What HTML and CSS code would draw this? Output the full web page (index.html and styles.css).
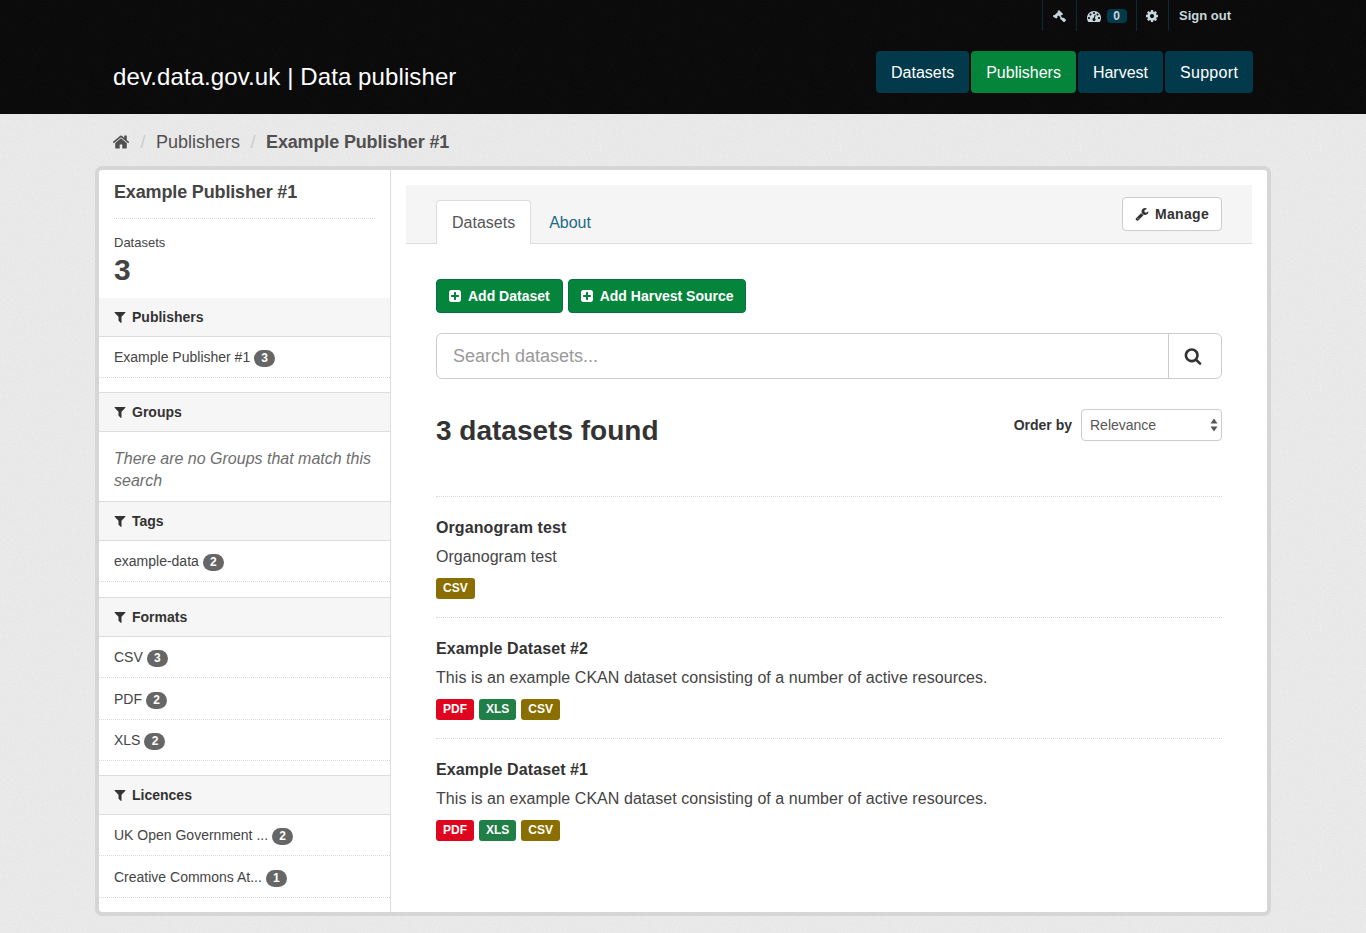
FILE: index.html
```html
<!DOCTYPE html>
<html lang="en">
<head>
    <meta charset="utf-8">
    <title>Example Publisher #1 - Publishers - dev.data.gov.uk | Data publisher</title>
    <link rel="stylesheet" href="styles.css">
</head>
<body>
<svg class="icon-defs" width="0" height="0" aria-hidden="true">
    <defs>
        <symbol id="i-home" viewBox="0 0 1792 1792"><path d="M1472 992v480q0 26-19 45t-45 19h-384v-384H768v384H384q-26 0-45-19t-19-45V992q0-1 .5-3t.5-3l575-474 575 474q1 2 1 6zm223-69l-62 74q-8 9-21 11h-3q-13 0-21-7L896 424l-692 577q-12 8-24 7-13-2-21-11l-62-74q-8-10-7-23.5t11-21.5l719-599q32-26 76-26t76 26l244 204V288q0-14 9-23t23-9h192q14 0 23 9t9 23v408l219 182q10 8 11 21.5t-7 23.5z"/></symbol>
        <symbol id="i-filter" viewBox="0 0 1792 1792"><path d="M1595 295q17 41-14 70l-493 493v742q0 42-39 59-13 5-25 5-27 0-45-19l-256-256q-19-19-19-45V858L211 365q-31-29-14-70 17-39 59-39h1280q42 0 59 39z"/></symbol>
        <symbol id="i-search" viewBox="0 0 1792 1792"><path d="M1216 832q0-185-131.5-316.5T768 384 451.5 515.5 320 832t131.5 316.5T768 1280t316.5-131.5T1216 832zm512 832q0 52-38 90t-90 38q-54 0-90-38l-343-342q-179 124-399 124-143 0-273.5-55.5t-225-150-150-225T64 832t55.5-273.5 150-225 225-150T768 128t273.5 55.5 225 150 150 225T1472 832q0 220-124 399l343 343q37 37 37 90z"/></symbol>
        <symbol id="i-plus" viewBox="0 0 1792 1792"><path d="M1408 960V832q0-26-19-45t-45-19h-320V448q0-26-19-45t-45-19H832q-26 0-45 19t-19 45v320H448q-26 0-45 19t-19 45v128q0 26 19 45t45 19h320v320q0 26 19 45t45 19h128q26 0 45-19t19-45v-320h320q26 0 45-19t19-45zm256-544v960q0 119-84.5 203.5T1376 1664H416q-119 0-203.5-84.5T128 1376V416q0-119 84.5-203.5T416 128h960q119 0 203.5 84.5T1664 416z"/></symbol>
        <symbol id="i-wrench" viewBox="0 0 1792 1792"><path d="M448 1472q0-26-19-45t-45-19-45 19-19 45 19 45 45 19 45-19 19-45zm644-420l-682 682q-37 37-90 37-52 0-91-37l-106-108q-38-36-38-90 0-53 38-91l681-681q39 98 114.5 173.5T1092 1052zm634-435q0 39-23 106-47 134-164.5 217.5T1280 1024q-185 0-316.5-131.5T832 576t131.5-316.5T1280 128q58 0 121.5 16.5T1509 191q16 11 16 28t-16 28l-293 169v224l193 107q5-3 79-48.5t135.5-81 70.5-35.5q15 0 23.5 10t8.5 25z"/></symbol>
        <symbol id="i-cog" viewBox="0 0 1792 1792"><path d="M1152 896q0-106-75-181t-181-75-181 75-75 181 75 181 181 75 181-75 75-181zm512-109v222q0 12-8 23t-20 13l-185 28q-19 54-39 91 35 50 107 138 10 12 10 25t-9 23q-27 37-99 108t-94 71q-12 0-26-9l-138-108q-44 23-91 38-16 136-29 186-7 28-36 28H785q-14 0-24.5-8.5T749 1634l-28-184q-49-16-90-37l-141 107q-10 9-25 9-14 0-25-11-126-114-165-168-7-10-7-23 0-12 8-23 15-21 51-66.5t54-70.5q-27-50-41-99l-183-27q-13-2-21-12.5t-8-23.5V783q0-12 8-23t19-13l186-28q14-46 39-92-40-57-107-138-10-12-10-24 0-10 9-23 26-36 98.5-107.5T465 263q13 0 26 10l138 107q44-23 91-38 16-136 29-186 7-28 36-28h222q14 0 24.5 8.5T1043 158l28 184q49 16 90 37l142-107q9-9 24-9 13 0 25 10 129 119 165 170 7 8 7 22 0 12-8 23-15 21-51 66.5t-54 70.5q26 50 41 98l183 28q13 2 21 12.5t8 23.5z"/></symbol>
        <symbol id="i-gavel" viewBox="0 0 1792 1792"><path d="M1771 1440q0 53-37 90l-107 108q-39 37-91 37-53 0-90-37l-363-364q-38-36-38-90 0-53 43-96l-256-256-126 126q-14 14-34 14t-34-14q2 2 12.5 12t12.5 13 10 11.5 10 13.5 6 13.5 5.5 16.5.5 18q0 38-28 68-3 3-16.5 18t-19 20.5-18.5 16.5-22 15.5-22 9-26 4.5q-40 0-68-28L151 979q-28-28-28-68 0-13 4.5-26t9-22 15.5-22 16.5-18.5 20.5-19 18-16.5q30-28 68-28 10 0 18 1.5t16.5 5.5 13.5 6 13.5 10 11.5 10 13 12.5 12 12.5q-14-14-14-34t14-34l348-348q14-14 34-14t34 14q-2-2-12.5-12t-12.5-13-10-11.5-10-13.5-6-13.5-5.5-16.5-.5-18q0-38 28-68 3-3 16.5-18t19-20.5 18.5-16.5 22-15.5 22-9 26-4.5q40 0 68 28l408 408q28 28 28 68 0 13-4.5 26t-9 22-15.5 22-16.5 18.5-20.5 19-18 16.5q-30 28-68 28-10 0-18-1.5t-16.5-5.5-13.5-6-13.5-10-11.5-10-13-12.5-12-12.5q14 14 14 34t-14 34L1109 904l256 256q43-43 96-43 52 0 91 37l363 363q37 39 37 91z"/></symbol>
        <symbol id="i-dash" viewBox="0 0 1792 1792"><path d="M384 1152q0-53-37.5-90.5T256 1024t-90.5 37.5T128 1152t37.5 90.5T256 1280t90.5-37.5T384 1152zm192-448q0-53-37.5-90.5T448 576t-90.5 37.5T320 704t37.5 90.5T448 832t90.5-37.5T576 704zm428 481l101-382q6-26-7.5-48.5T1059 725t-48 6.5-30 39.5l-101 382q-60 5-107 43.5t-63 98.5q-20 77 20 146t117 89 146-20 89-117q16-60-6-117t-72-91zm660-33q0-53-37.5-90.5T1536 1024t-90.5 37.5-37.5 90.5 37.5 90.5 90.5 37.5 90.5-37.5 37.5-90.5zm-640-640q0-53-37.5-90.5T896 384t-90.5 37.5T768 512t37.5 90.5T896 640t90.5-37.5T1024 512zm448 192q0-53-37.5-90.5T1344 576t-90.5 37.5T1216 704t37.5 90.5 90.5 37.5 90.5-37.5T1472 704zm320 448q0 261-141 483-19 29-54 29H195q-35 0-54-29Q0 1414 0 1152q0-182 71-348t191-286 286-191 348-71 348 71 286 191 191 286 71 348z"/></symbol>
    </defs>
</svg>

<header class="masthead">
    <div class="container">
        <nav class="account">
            <a class="account-item account-tool" href="#"><svg class="icon-14"><use href="#i-gavel"/></svg></a>
            <a class="account-item account-dash" href="#"><svg class="icon-14"><use href="#i-dash"/></svg><span class="account-badge">0</span></a>
            <a class="account-item account-tool" href="#"><svg class="icon-14"><use href="#i-cog"/></svg></a>
            <a class="account-item account-text" href="#">Sign out</a>
        </nav>
        <div class="masthead-row">
            <a class="brand" href="#">dev.data.gov.uk | Data publisher</a>
            <nav class="main-nav">
                <a href="#">Datasets</a>
                <a class="active" href="#">Publishers</a>
                <a href="#">Harvest</a>
                <a class="nav-last" href="#">Support</a>
            </nav>
        </div>
    </div>
</header>

<div class="container">
    <ol class="breadcrumb">
        <li><a href="#"><svg class="icon-18"><use href="#i-home"/></svg></a></li>
        <li class="sep">/</li>
        <li><a href="#">Publishers</a></li>
        <li class="sep">/</li>
        <li class="current"><a href="#">Example Publisher #1</a></li>
    </ol>
</div>

<div class="wrapper">
    <aside class="sidebar">
        <div class="pub-info">
            <h1 class="pub-title">Example Publisher #1</h1>
            <div class="pub-label">Datasets</div>
            <div class="pub-count">3</div>
        </div>

        <section class="facet">
            <h2 class="facet-head first"><svg class="icon-14"><use href="#i-filter"/></svg>Publishers</h2>
            <ul class="facet-list">
                <li><a href="#">Example Publisher #1</a> <span class="count">3</span></li>
            </ul>
        </section>

        <section class="facet facet-empty">
            <h2 class="facet-head"><svg class="icon-14"><use href="#i-filter"/></svg>Groups</h2>
            <p class="empty">There are no Groups that match this search</p>
        </section>

        <section class="facet facet-tags">
            <h2 class="facet-head"><svg class="icon-14"><use href="#i-filter"/></svg>Tags</h2>
            <ul class="facet-list">
                <li><a href="#">example-data</a> <span class="count">2</span></li>
            </ul>
        </section>

        <section class="facet">
            <h2 class="facet-head"><svg class="icon-14"><use href="#i-filter"/></svg>Formats</h2>
            <ul class="facet-list">
                <li><a href="#">CSV</a> <span class="count">3</span></li>
                <li><a href="#">PDF</a> <span class="count">2</span></li>
                <li><a href="#">XLS</a> <span class="count">2</span></li>
            </ul>
        </section>

        <section class="facet">
            <h2 class="facet-head"><svg class="icon-14"><use href="#i-filter"/></svg>Licences</h2>
            <ul class="facet-list">
                <li><a href="#">UK Open Government ...</a> <span class="count">2</span></li>
                <li><a href="#">Creative Commons At...</a> <span class="count">1</span></li>
            </ul>
        </section>
    </aside>

    <main class="primary">
        <div class="toolbar">
            <ul class="tabs">
                <li class="active"><a href="#">Datasets</a></li>
                <li><a href="#">About</a></li>
            </ul>
            <a class="btn-manage" href="#"><svg class="icon-14"><use href="#i-wrench"/></svg>Manage</a>
        </div>

        <div class="content">
            <div class="actions">
                <a class="btn-green" href="#"><svg class="icon-14"><use href="#i-plus"/></svg>Add Dataset</a>
                <a class="btn-green btn-wide" href="#"><svg class="icon-14"><use href="#i-plus"/></svg>Add Harvest Source</a>
            </div>

            <form class="search">
                <input class="search-input" type="text" placeholder="Search datasets...">
                <button class="search-btn" type="button"><svg class="icon-18"><use href="#i-search"/></svg></button>
            </form>

            <div class="results-head">
                <h2 class="results-title">3 datasets found</h2>
                <div class="order">
                    <label class="order-label" for="order">Order by</label>
                    <div class="select-wrap">
                        <select id="order" class="order-select">
                            <option>Relevance</option>
                        </select>
                        <svg class="select-arrows" width="8" height="14" viewBox="0 0 8 14"><path d="M4 0.5 7.5 5.5H0.5Z M4 13.5 0.5 8.5H7.5Z"/></svg>
                    </div>
                </div>
            </div>

            <ul class="datasets">
                <li class="dataset">
                    <h3 class="dataset-title"><a href="#">Organogram test</a></h3>
                    <p class="dataset-desc">Organogram test</p>
                    <div class="formats"><span class="fmt fmt-csv">CSV</span></div>
                </li>
                <li class="dataset">
                    <h3 class="dataset-title"><a href="#">Example Dataset #2</a></h3>
                    <p class="dataset-desc">This is an example CKAN dataset consisting of a number of active resources.</p>
                    <div class="formats"><span class="fmt fmt-pdf">PDF</span><span class="fmt fmt-xls">XLS</span><span class="fmt fmt-csv">CSV</span></div>
                </li>
                <li class="dataset">
                    <h3 class="dataset-title"><a href="#">Example Dataset #1</a></h3>
                    <p class="dataset-desc">This is an example CKAN dataset consisting of a number of active resources.</p>
                    <div class="formats"><span class="fmt fmt-pdf">PDF</span><span class="fmt fmt-xls">XLS</span><span class="fmt fmt-csv">CSV</span></div>
                </li>
            </ul>
        </div>
    </main>
</div>
</body>
</html>
```

FILE: styles.css
```css
* {
    box-sizing: border-box;
}

html, body {
    margin: 0;
    padding: 0;
}

body {
    background-color: #f0f0f0;
    background-image: url("data:image/svg+xml,%3Csvg xmlns='http://www.w3.org/2000/svg' width='240' height='240'%3E%3Cfilter id='n'%3E%3CfeTurbulence type='fractalNoise' baseFrequency='.8' numOctaves='2' stitchTiles='stitch'/%3E%3CfeColorMatrix values='0 0 0 0 0 0 0 0 0 0 0 0 0 0 0 0 0 0 .06 0'/%3E%3C/filter%3E%3Crect width='240' height='240' filter='url(%23n)'/%3E%3C/svg%3E");
    color: #444;
    font-family: "Liberation Sans", Arial, sans-serif;
    font-size: 14px;
    line-height: 20px;
}

a {
    color: inherit;
    text-decoration: none;
}

ul, ol {
    list-style: none;
    margin: 0;
    padding: 0;
}

h1, h2, h3, p {
    margin: 0;
}

svg {
    fill: currentColor;
    flex: none;
}

.icon-defs {
    position: absolute;
}

.icon-14 {
    width: 14px;
    height: 14px;
}

.icon-18 {
    width: 18px;
    height: 18px;
}

.container {
    width: 1140px;
    margin: 0 auto;
}

/* masthead */
.masthead {
    height: 114px;
    background-color: #060606;
    background-image: url("data:image/svg+xml,%3Csvg xmlns='http://www.w3.org/2000/svg' width='240' height='240'%3E%3Cfilter id='n'%3E%3CfeTurbulence type='fractalNoise' baseFrequency='.8' numOctaves='2' stitchTiles='stitch'/%3E%3CfeColorMatrix values='0 0 0 0 1 0 0 0 0 1 0 0 0 0 1 0 0 0 .04 0'/%3E%3C/filter%3E%3Crect width='240' height='240' filter='url(%23n)'/%3E%3C/svg%3E");
}

.account {
    display: flex;
    justify-content: flex-end;
    height: 31px;
    padding-right: 13px;
    color: #c6d7db;
}

.account-item {
    display: flex;
    align-items: center;
    justify-content: center;
    width: 32px;
    border-left: 1px solid #0e2a35;
}

.account-tool {
    padding-right: 2px;
}

.account-item:first-child {
    width: 34px;
}

.account-dash {
    width: 60px;
    gap: 6px;
}

.account-text {
    width: 72px;
    justify-content: flex-start;
    padding-left: 10px;
    font-size: 13px;
    font-weight: bold;
}

.account-badge {
    width: 20px;
    height: 14px;
    border-radius: 4px;
    background: #023a4b;
    font-size: 12px;
    font-weight: bold;
    line-height: 14px;
    text-align: center;
}

.masthead-row {
    display: flex;
    justify-content: space-between;
    margin-top: 20px;
}

.brand {
    margin-top: 5px;
    color: #fff;
    font-size: 24px;
    letter-spacing: 0.1px;
    line-height: 42px;
}

.main-nav {
    display: flex;
    gap: 2px;
}

.main-nav a {
    height: 42px;
    padding: 1px 15px 0;
    border-radius: 4px;
    background: #023a4b;
    color: #fff;
    font-size: 16px;
    line-height: 42px;
}

.main-nav a.active {
    background: #05843c;
}

.main-nav a.nav-last {
    width: 88px;
    letter-spacing: 0.3px;
    text-align: center;
}

/* breadcrumb */
.breadcrumb {
    display: flex;
    align-items: center;
    height: 52px;
    padding-top: 3px;
    color: #505050;
    font-size: 18px;
}

.breadcrumb svg {
    display: block;
    margin-left: -1px;
}

.breadcrumb .sep {
    width: 26px;
    color: #ccc;
    text-align: center;
}

.breadcrumb .current {
    font-weight: bold;
    letter-spacing: -0.15px;
}

/* main box */
.wrapper {
    display: flex;
    width: 1176px;
    height: 750px;
    margin: 0 auto;
    border: 4px solid #d6d6d6;
    border-radius: 7px;
    background: #fff;
}

.sidebar {
    width: 292px;
    flex: none;
    border-right: 1px solid #ddd;
}

.pub-info {
    height: 128px;
    padding: 0 15px;
}

.pub-title {
    height: 49px;
    border-bottom: 1px dotted #d8d8d8;
    margin-bottom: 15px;
    font-size: 18px;
    letter-spacing: -0.15px;
    line-height: 44px;
}

.pub-label {
    font-size: 13px;
    line-height: 18px;
}

.pub-count {
    font-size: 30px;
    font-weight: bold;
    line-height: 36px;
}

.facet {
    margin-bottom: 14px;
}

.facet-empty {
    margin-bottom: 0;
}

.facet-tags {
    margin-bottom: 15px;
}

.facet-head {
    display: flex;
    align-items: center;
    gap: 5px;
    height: 40px;
    padding-left: 14px;
    border-top: 1px solid #ddd;
    border-bottom: 1px solid #ddd;
    background: #f6f6f6;
    color: #333;
    font-size: 14px;
}

.facet-head.first {
    height: 39px;
    border-top: 0;
}

.facet-list li {
    display: flex;
    align-items: center;
    gap: 4px;
    height: 41px;
    padding-left: 15px;
    border-bottom: 1px dotted #d8d8d8;
}

.facet-list li + li {
    margin-top: 0.5px;
}

.count {
    width: 21px;
    height: 17px;
    margin-top: 3px;
    border-radius: 9px;
    background: #666;
    color: #fff;
    font-size: 12px;
    font-weight: bold;
    line-height: 17px;
    text-align: center;
}

.empty {
    padding: 16px 15px 9px;
    color: #6e6e6e;
    font-size: 16px;
    font-style: italic;
    line-height: 22px;
}

/* right column */
.primary {
    flex: 1;
    padding: 15px;
}

.toolbar {
    display: flex;
    justify-content: space-between;
    height: 59px;
    padding: 0 30px;
    border-bottom: 1px solid #ddd;
    background: #f5f5f5;
}

.tabs {
    display: flex;
    align-self: flex-end;
    margin-bottom: -1px;
    font-size: 16px;
}

.tabs li {
    height: 44px;
    margin-right: 1px;
    padding: 0 16px;
    border: 1px solid transparent;
    border-bottom: 0;
    color: #1d6a85;
    line-height: 44px;
}

.tabs li.active {
    padding: 0 15px;
    border-color: #ddd;
    border-radius: 4px 4px 0 0;
    background: #fff;
    color: #555;
}

.btn-manage {
    display: flex;
    align-items: center;
    gap: 6px;
    height: 34px;
    margin-top: 12px;
    padding: 0 12px;
    border: 1px solid #ccc;
    border-radius: 4px;
    background: #fff;
    color: #333;
    font-weight: bold;
    letter-spacing: 0.3px;
}

.content {
    padding: 35px 30px 0;
}

.actions {
    display: flex;
    gap: 5px;
}

.btn-green {
    display: flex;
    align-items: center;
    gap: 6px;
    height: 34px;
    padding: 0 12px 0 11px;
    border: 1px solid #0c6a4f;
    border-radius: 4px;
    background: #05843c;
    color: #fff;
    font-weight: bold;
}

.btn-green.btn-wide {
    padding-right: 11px;
}

.search {
    display: flex;
    height: 46px;
    margin-top: 20px;
    border: 1px solid #ccc;
    border-radius: 6px;
}

.search-input {
    flex: 1;
    min-width: 0;
    padding: 0 16px;
    border: 0;
    border-radius: 6px;
    background: transparent;
    color: #555;
    font-family: inherit;
    font-size: 18px;
}

.search-input::placeholder {
    color: #999;
    opacity: 1;
}

.search-btn {
    display: flex;
    align-items: center;
    justify-content: center;
    width: 53px;
    padding: 0 4px 0 0;
    border: 0;
    border-left: 1px solid #ccc;
    background: transparent;
    color: #333;
}

.results-head {
    display: flex;
    justify-content: space-between;
    height: 88px;
    margin-top: 30px;
    border-bottom: 1px dotted #d8d8d8;
}

.results-title {
    color: #333;
    font-size: 28px;
    line-height: 44px;
}

.order {
    display: flex;
    align-items: center;
    gap: 9px;
    height: 32px;
}

.order-label {
    color: #333;
    font-weight: bold;
}

.select-wrap {
    position: relative;
}

.order-select {
    display: block;
    width: 141px;
    height: 32px;
    padding: 0 8px;
    border: 1px solid #ccc;
    border-radius: 4px;
    background: #fff;
    color: #555;
    font-family: inherit;
    font-size: 14px;
    appearance: none;
}

.select-arrows {
    position: absolute;
    top: 9px;
    right: 4px;
    fill: #555;
    pointer-events: none;
}

.dataset {
    height: 121px;
    padding-top: 21px;
    border-bottom: 1px dotted #d8d8d8;
}

.dataset:last-child {
    border-bottom: 0;
}

.dataset-title {
    color: #333;
    font-size: 16px;
    letter-spacing: 0.1px;
    line-height: 20px;
}

.dataset-desc {
    margin-top: 8px;
    font-size: 16px;
    letter-spacing: 0.05px;
    line-height: 22px;
}

.formats {
    display: flex;
    gap: 5px;
    margin-top: 10px;
}

.fmt {
    height: 21px;
    padding: 0 7px;
    border-radius: 3px;
    color: #fff;
    font-size: 12px;
    font-weight: bold;
    line-height: 20px;
}

.fmt-csv {
    background: #8a6f00;
}

.fmt-pdf {
    background: #e0051e;
}

.fmt-xls {
    background: #1f7f47;
}
```
